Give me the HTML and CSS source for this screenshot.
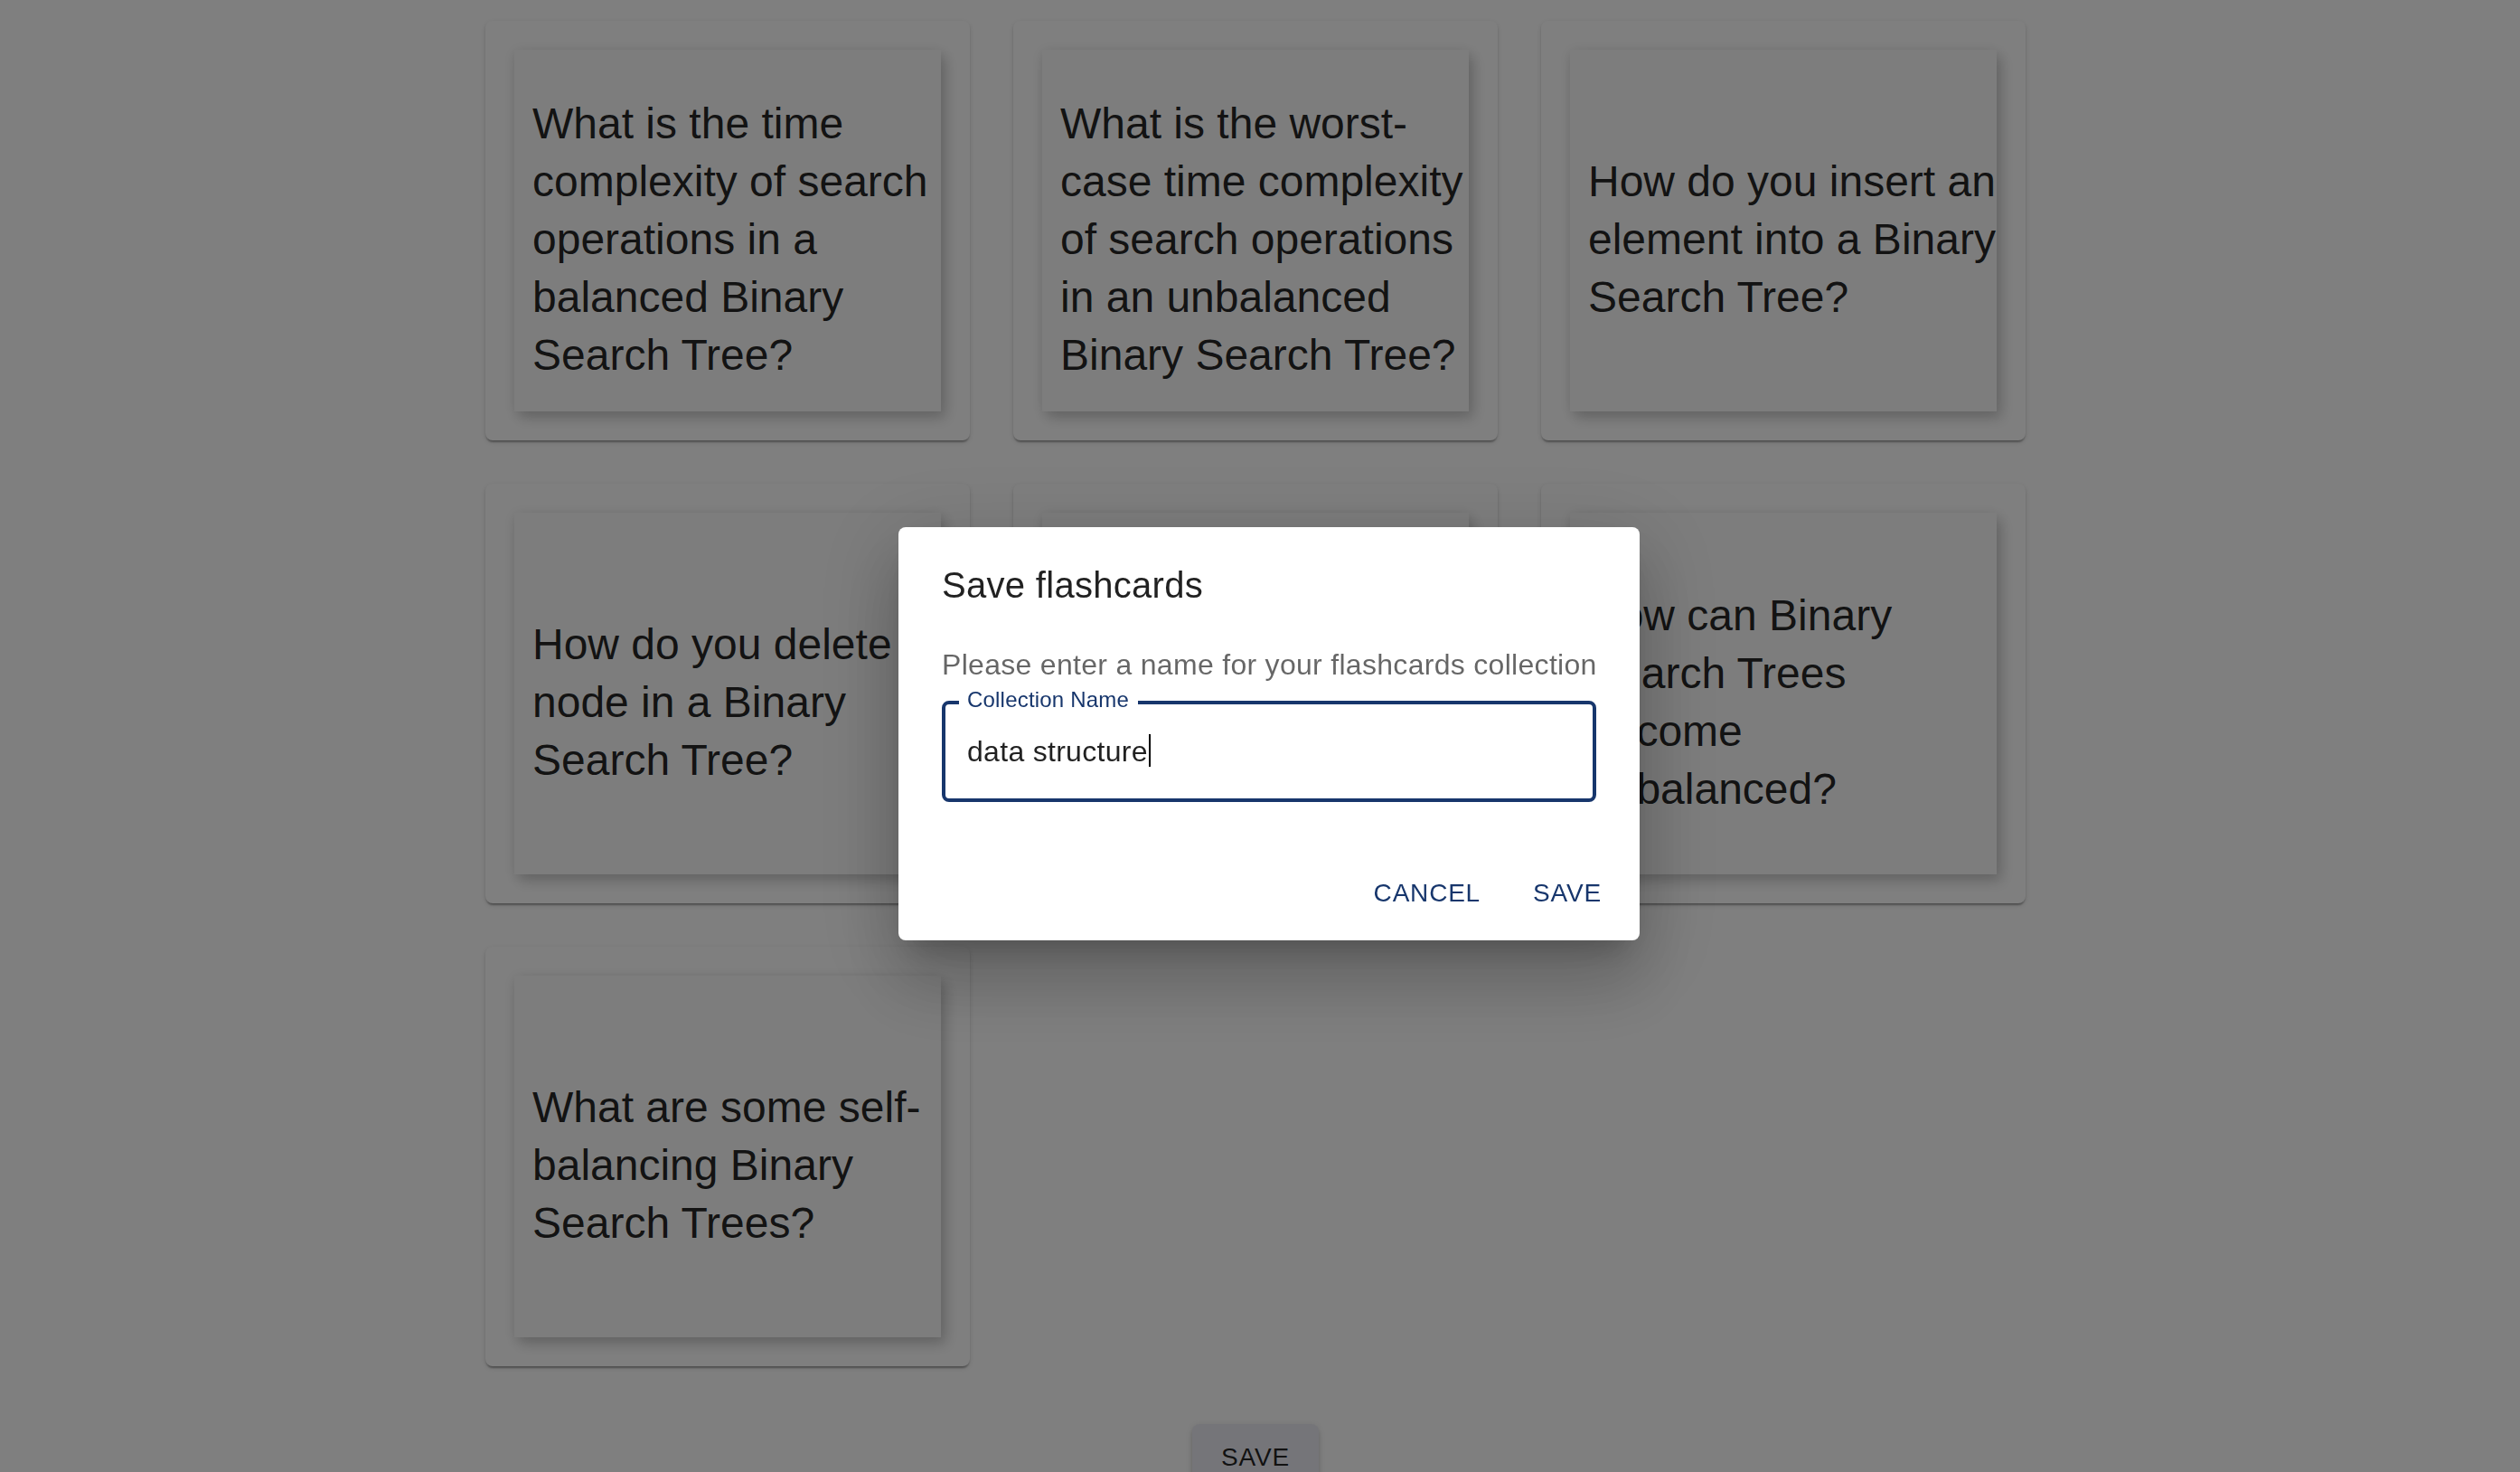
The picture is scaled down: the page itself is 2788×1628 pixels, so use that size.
FILE: index.html
```html
<!DOCTYPE html>
<html lang="en">
<head>
<meta charset="utf-8">
<title>Flashcards</title>
<link rel="stylesheet" href="styles.css">
</head>
<body>
<main class="page">
  <section class="grid">
    <div class="card">
      <div class="card-face"><p class="card-text">What is the time complexity of search operations in a balanced Binary Search Tree?</p></div>
    </div>
    <div class="card">
      <div class="card-face"><p class="card-text">What is the worst-case time complexity of search operations in an unbalanced Binary Search Tree?</p></div>
    </div>
    <div class="card">
      <div class="card-face"><p class="card-text">How do you insert an element into a Binary Search Tree?</p></div>
    </div>
    <div class="card">
      <div class="card-face"><p class="card-text">How do you delete a node in a Binary Search Tree?</p></div>
    </div>
    <div class="card">
      <div class="card-face"><p class="card-text">What is an in-order traversal of a Binary Search Tree?</p></div>
    </div>
    <div class="card">
      <div class="card-face"><p class="card-text">How can Binary Search Trees become unbalanced?</p></div>
    </div>
    <div class="card">
      <div class="card-face"><p class="card-text">What are some self-balancing Binary Search Trees?</p></div>
    </div>
  </section>
  <button class="save-main" type="button">Save</button>
</main>

<div class="backdrop">
  <div class="dialog" role="dialog" aria-labelledby="dlg-title">
    <h2 class="dialog-title" id="dlg-title">Save flashcards</h2>
    <div class="dialog-content">
      <p class="dialog-text">Please enter a name for your flashcards collection</p>
      <div class="field">
        <span class="field-label">Collection Name</span>
        <div class="field-input" role="textbox">data structure<span class="caret"></span></div>
      </div>
    </div>
    <div class="dialog-actions">
      <button class="btn-text" type="button">Cancel</button>
      <button class="btn-text" type="button">Save</button>
    </div>
  </div>
</div>
</body>
</html>
```

FILE: styles.css
```css
html, body {
  margin: 0;
  padding: 0;
  height: 100%;
  overflow: hidden;
  background: #ffffff;
  font-family: "Liberation Sans", Arial, Helvetica, sans-serif;
}

.page {
  display: flex;
  flex-direction: column;
  align-items: center;
  padding: 23px 10px 0 0;
}

.grid {
  display: grid;
  grid-template-columns: repeat(3, 536px);
  gap: 48px;
}

.card {
  box-sizing: border-box;
  height: 464px;
  padding: 32px;
  background: #ffffff;
  border-radius: 8px;
  box-shadow: 0 4px 2px -2px rgba(0,0,0,0.2), 0 2px 2px 0 rgba(0,0,0,0.14), 0 2px 6px 0 rgba(0,0,0,0.12);
}

.card-face {
  box-sizing: border-box;
  height: 400px;
  padding: 20px 0 0 20px;
  display: flex;
  align-items: center;
  background: #fbfbfb;
  box-shadow: 0 2px 14px rgba(0,0,0,0.10), 6px 8px 14px rgba(0,0,0,0.16);
}

.card-text {
  margin: 0;
  font-size: 48px;
  line-height: 64px;
  color: rgba(0,0,0,0.87);
}

.save-main {
  margin-top: 64px;
  padding: 12px 32px;
  border: 0;
  border-radius: 8px;
  background: #ebebf3;
  color: rgba(0,0,0,0.87);
  font-family: inherit;
  font-size: 28px;
  line-height: 49px;
  letter-spacing: 0.8px;
  text-transform: uppercase;
  box-shadow: 0 6px 2px -4px rgba(0,0,0,0.2), 0 4px 4px 0 rgba(0,0,0,0.14), 0 2px 10px 0 rgba(0,0,0,0.12);
}

.backdrop {
  position: fixed;
  inset: 0;
  box-sizing: border-box;
  padding: 0 0 5px 20px;
  display: flex;
  align-items: center;
  justify-content: center;
  background: rgba(0,0,0,0.5);
}

.dialog {
  box-sizing: border-box;
  width: 820px;
  background: #ffffff;
  border-radius: 8px;
  box-shadow: 0 22px 30px -14px rgba(0,0,0,0.2), 0 48px 76px 6px rgba(0,0,0,0.14), 0 18px 92px 16px rgba(0,0,0,0.12);
}

.dialog-title {
  margin: 0;
  padding: 32px 48px;
  font-size: 40px;
  line-height: 64px;
  font-weight: 400;
  letter-spacing: 0.3px;
  color: rgba(0,0,0,0.87);
}

.dialog-content {
  padding: 0 48px 40px;
}

.dialog-text {
  margin: 0;
  font-size: 32px;
  line-height: 48px;
  letter-spacing: 0.3px;
  white-space: nowrap;
  color: rgba(0,0,0,0.6);
}

.field {
  position: relative;
  box-sizing: border-box;
  height: 112px;
  margin: 16px 0 8px;
  border: 4px solid #17366c;
  border-radius: 8px;
}

.field-label {
  position: absolute;
  left: 15px;
  top: -17px;
  padding: 0 10px 0 9px;
  background: #ffffff;
  font-size: 24px;
  line-height: 24px;
  letter-spacing: 0.2px;
  color: #17366c;
}

.field-input {
  padding: 29px 24px;
  font-size: 32px;
  line-height: 46px;
  letter-spacing: 0.3px;
  color: rgba(0,0,0,0.87);
  white-space: nowrap;
}

.caret {
  display: inline-block;
  width: 2px;
  height: 36px;
  margin-left: 1px;
  vertical-align: -6px;
  background: #000000;
}

.dialog-actions {
  display: flex;
  justify-content: flex-end;
  gap: 16px;
  padding: 16px;
}

.btn-text {
  min-width: 128px;
  padding: 12px 16px;
  border: 0;
  border-radius: 8px;
  background: transparent;
  color: #17366c;
  font-family: inherit;
  font-size: 28px;
  line-height: 49px;
  letter-spacing: 0.8px;
  text-transform: uppercase;
}
```
